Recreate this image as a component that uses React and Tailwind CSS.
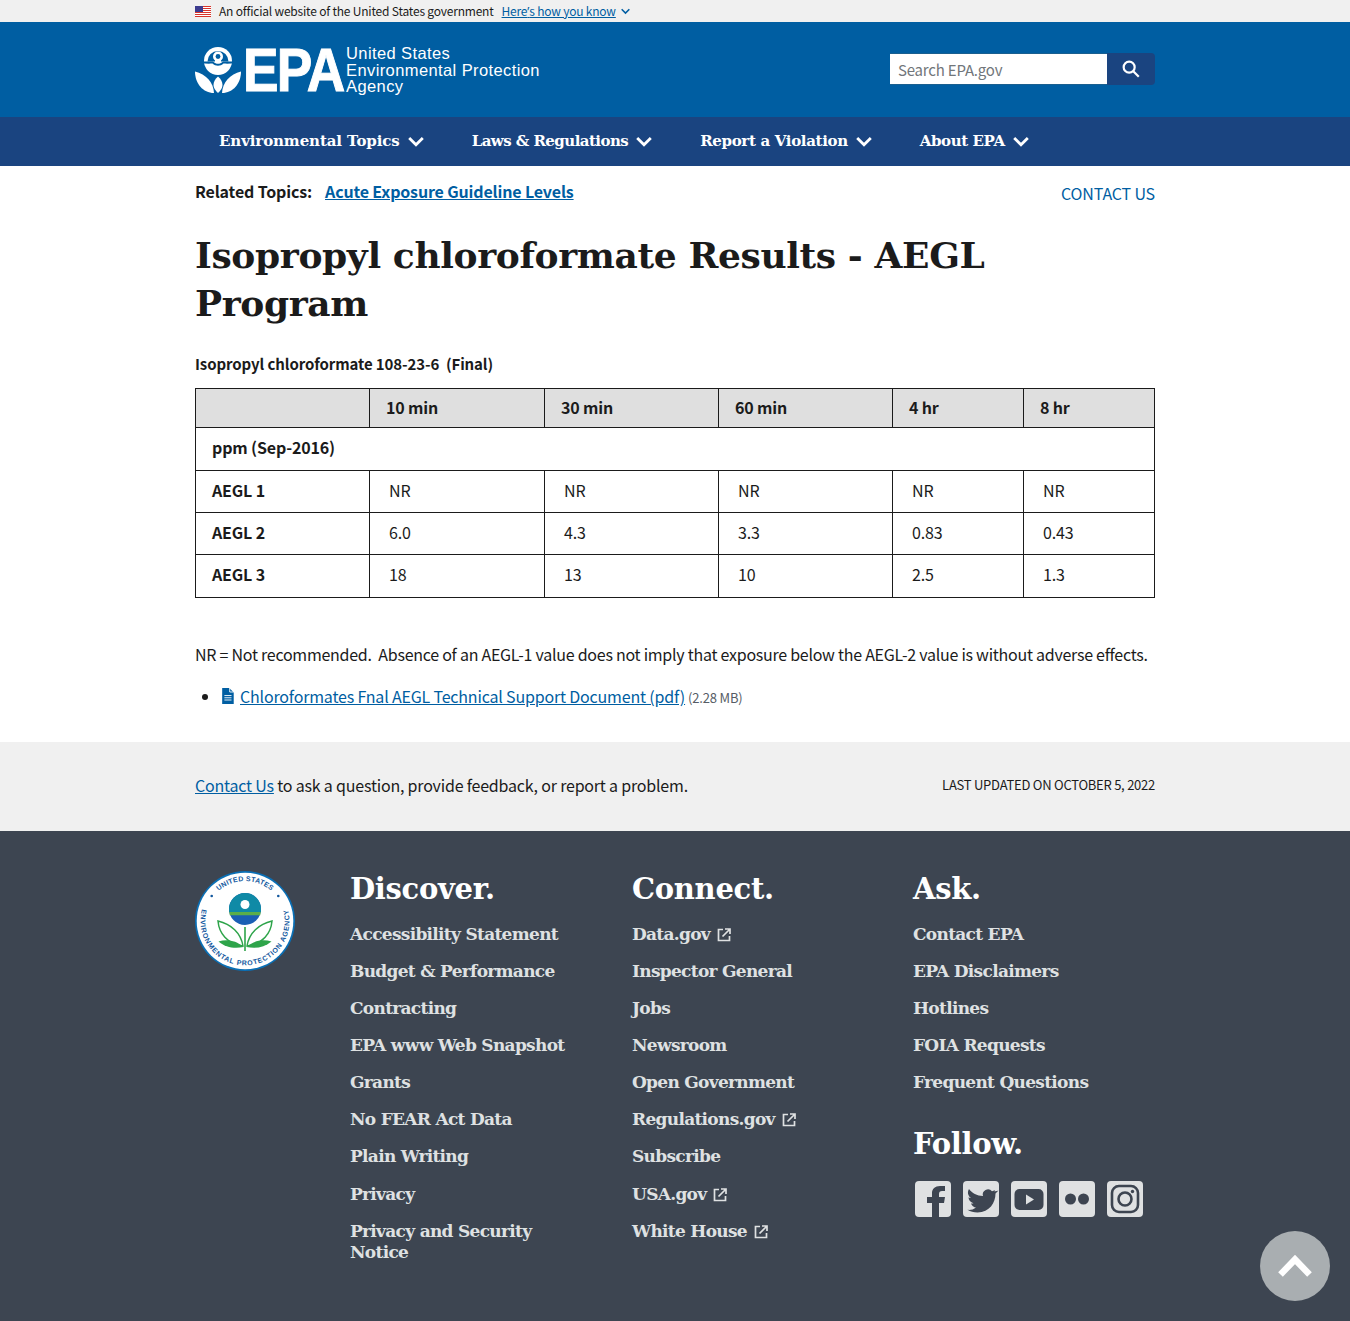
import React from "react";

const sans = "font-['Noto_Sans_CJK_SC','Noto_Sans',sans-serif]";
const serif = "font-['DejaVu_Serif',serif]";

function Chevron({ className }) {
  return (
    <svg viewBox="0 0 16 16" className={className} fill="none" stroke="currentColor" strokeWidth="2.8">
      <path d="M1.2 4 8 10.800 14.800 4" />
    </svg>
  );
}

function Ext() {
  return (
    <svg viewBox="0 0 16 16" className="inline-block w-[16px] h-[16px] ml-[6px] align-[-3px]" fill="none" stroke="#dfe1e2" strokeWidth="1.700">
      <path d="M7 2.500H2.500v11h11V9" />
      <path d="M6.500 9.500 13.500 2.500M9 2h5v5" />
    </svg>
  );
}

function Flag() {
  return (
    <svg viewBox="0 0 16 11" className="w-[16px] h-[11px]">
      <rect width="16" height="11" fill="#fff" />
      {[0, 2, 4, 6, 8, 10].map((y) => (
        <rect key={y} y={y} width="16" height="1" fill="#d9342b" />
      ))}
      <rect width="8" height="6" fill="#3c3b8e" />
    </svg>
  );
}

function Mark({ className }) {
  const c = "#fff";
  const bg = "#005ea2";
  return (
    <svg viewBox="0 0 46 46" className={className}>
      <circle cx="23" cy="14" r="14" fill={c} />
      <path d="M12.500 14.500a10.500 10.500 0 0 1 21 0z" fill={bg} />
      <circle cx="23" cy="9.500" r="5" fill={c} />
      <circle cx="23" cy="9.500" r="2.400" fill={bg} />
      <path d="M20 13h6v2h-6z" fill={c} />
      <path d="M6 14.300c4 .4 8 .2 12 .2 1.500 1.600 3.500 2.300 5 2.300s3.500-.7 5-2.300c4 0 8 .2 12-.2v1.700c-4 .8-8 .8-11.500.6-1.500 1.400-3.500 2.200-5.500 2.200s-4-.8-5.500-2.200C14 16.800 10 16.800 6 16z" fill={bg} />
      <path d="M19 46C18.500 35.500 11 27 0 24.500 0 36.500 8 46 19 46z" fill={c} />
      <path d="M27 46c.5-10.500 8-19 19-21.500C46 36.500 38 46 27 46z" fill={c} />
      <path d="M23 29.500c2.500 2.200 4.500 5 4.500 8.500 0 3-2 5.800-4.500 8-2.500-2.200-4.500-5-4.500-8 0-3.500 2-6.300 4.500-8.500z" fill={c} />
    </svg>
  );
}

function Seal() {
  return (
    <svg viewBox="0 0 100 100" className="w-[100px] h-[100px] shrink-0">
      <defs>
        <path id="arcTop" d="M20.800 22.700A40 40 0 0 1 79.200 22.700" />
        <path id="arcBottom" d="M9 32.600A44.500 44.500 0 1 0 91 32.600" />
      </defs>
      <circle cx="50" cy="50" r="50" fill="#0a6fb5" />
      <circle cx="50" cy="50" r="48.300" fill="#fff" />
      <text fontFamily="Liberation Sans, sans-serif" fontSize="7" fontWeight="700" fill="#12589e" letterSpacing=".2">
        <textPath href="#arcTop" startOffset="50%" textAnchor="middle">UNITED STATES</textPath>
      </text>
      <text fontFamily="Liberation Sans, sans-serif" fontSize="7" fontWeight="700" fill="#12589e" letterSpacing=".75">
        <textPath href="#arcBottom" startOffset="50%" textAnchor="middle">ENVIRONMENTAL PROTECTION AGENCY</textPath>
      </text>
      <circle cx="16.700" cy="25" r="1.300" fill="#12589e" />
      <circle cx="83.300" cy="25" r="1.300" fill="#12589e" />
      <circle cx="50" cy="38" r="16" fill="#1a5fb4" />
      <path d="M34 38a16 16 0 0 1 32 0v3H34z" fill="#0f8aa6" />
      <circle cx="50" cy="33.500" r="4.500" fill="#fff" />
      <path d="M34.300 41h31.400l-.5 3.200H34.800z" fill="#5bae4a" />
      <path d="M48 75C46 62 36 53 23 50c1 12 9 23 25 25z" fill="#fff" stroke="#2ea44a" strokeWidth="1.500" />
      <path d="M52 75c2-13 12-22 25-25-1 12-9 23-25 25z" fill="#fff" stroke="#2ea44a" strokeWidth="1.500" />
      <path d="M48.500 76c-8-7-17-8-25-5.500 7 6 16 7.500 25 5.500z" fill="#2ea44a" />
      <path d="M51.500 76c8-7 17-8 25-5.500-7 6-16 7.500-25 5.500z" fill="#2ea44a" />
      <path d="M50 56v24" stroke="#2ea44a" strokeWidth="1.600" />
    </svg>
  );
}

function Social({ children }) {
  return (
    <a className="block w-[36px] h-[36px] rounded-[4px] bg-[#dfe1e2] overflow-hidden">
      <svg viewBox="0 0 36 36" className="w-full h-full" fill="#3d4551">{children}</svg>
    </a>
  );
}

const topics = [
  ["Environmental Topics", "tracking-[-0.1px]"],
  ["Laws & Regulations", "tracking-[-0.55px]"],
  ["Report a Violation", "tracking-[-0.33px]"],
  ["About EPA", "tracking-[-0.4px]"],
];

const rows = [
  ["AEGL 1", "NR", "NR", "NR", "NR", "NR"],
  ["AEGL 2", "6.0", "4.3", "3.3", "0.83", "0.43"],
];
const lastRow = ["AEGL 3", "18", "13", "10", "2.5", "1.3"];

const discover = ["Accessibility Statement", "Budget & Performance", "Contracting", "EPA www Web Snapshot", "Grants", "No FEAR Act Data", "Plain Writing", "Privacy", "Privacy and Security Notice"];
const connect = [["Data.gov", 1], ["Inspector General"], ["Jobs"], ["Newsroom"], ["Open Government"], ["Regulations.gov", 1], ["Subscribe"], ["USA.gov", 1], ["White House", 1]];
const ask = ["Contact EPA", "EPA Disclaimers", "Hotlines", "FOIA Requests", "Frequent Questions"];

const linkCls = `${serif} block text-[17px] leading-[21px] font-bold text-[#dfe1e2] mb-[16.090px] tracking-[-0.7px]`;
const footHead = `${serif} text-[29px] leading-[36px] font-bold text-white mb-[17px] tracking-[-0.3px]`;
const cell = "border border-[#1b1b1b] pb-[4px]";
const headCell = "border border-[#1b1b1b] pb-[2px]";

export default function App() {
  return (
    <div className={`${sans} relative text-[16px] tracking-[-0.15px] text-[#1b1b1b] bg-white min-h-[1321px]`}>
      <div className="bg-[#f0f0f0] h-[22px]">
        <div className="w-[960px] mx-auto flex items-center h-full text-[12px] tracking-[-0.2px] leading-[22px]">
          <Flag />
          <span className="ml-[8px]">An official website of the United States government</span>
          <a className="ml-[8px] text-[#005ea2] underline">Here<span className="font-['Noto_Sans',sans-serif]">’</span>s how you know</a>
          <Chevron className="w-[9px] h-[9px] ml-[5px] text-[#005ea2]" />
        </div>
      </div>

      <header className="bg-[#005ea2] h-[95px]">
        <div className="w-[960px] mx-auto h-full flex items-center justify-between">
          <div className="flex items-center text-white tracking-normal">
            <Mark className="w-[46px] h-[46px]" />
            <span className="font-['Liberation_Sans',sans-serif] font-bold text-[62px] leading-[46px] tracking-[-2px] ml-[2px] w-[104px] origin-left scale-x-[0.86] [-webkit-text-stroke:1px_white]">EPA</span>
            <div className="font-['Liberation_Sans',sans-serif] text-[16.500px] leading-[16.500px] tracking-[0.4px] ml-[-1px] mt-[1px] whitespace-nowrap">
              <div>United States</div>
              <div>Environmental Protection</div>
              <div>Agency</div>
            </div>
          </div>
          <div className="flex mt-[-1px]">
            <div className="w-[217px] h-[32px] bg-white text-[15px] tracking-[-0.2px] leading-[32px] pl-[8px] text-[#71767a] border-y border-[#1a5f8f]">Search EPA.gov</div>
            <button className="w-[48px] h-[32px] bg-[#1a4480] rounded-r-[4px] flex items-center justify-center">
              <svg viewBox="0 0 24 24" className="w-[22px] h-[22px]" fill="none" stroke="#fff" strokeWidth="2.400">
                <circle cx="10" cy="10" r="6" />
                <path d="m14.500 14.500 6 6" />
              </svg>
            </button>
          </div>
        </div>
      </header>

      <nav className="bg-[#1a4480] h-[49px]">
        <div className={`${serif} w-[960px] mx-auto h-full flex items-center pl-[24px] gap-[48px] text-white font-bold text-[15px]`}>
          {topics.map(([t, tr]) => (
            <span key={t} className="flex items-center gap-[8px]">
              <span className={tr}>{t}</span>
              <Chevron className="w-[16px] h-[16px]" />
            </span>
          ))}
        </div>
      </nav>

      <main className="w-[960px] mx-auto">
        <div className="flex justify-between pt-[14px]">
          <div className="leading-[22px]">
            <b className="font-bold">Related Topics:</b>
            <a className="ml-[13px] font-bold text-[#005ea2] underline">Acute Exposure Guideline Levels</a>
          </div>
          <a className="text-[#005ea2] leading-[26px]">CONTACT US</a>
        </div>
        <h1 className={`${serif} text-[36px] leading-[47.500px] font-bold mt-[26px] tracking-[-0.37px]`}>Isopropyl chloroformate Results - AEGL Program</h1>
        <p className="font-bold mt-[26px] text-[15px] leading-[22px] tracking-[-0.1px]">Isopropyl chloroformate 108-23-6&nbsp; (Final)</p>
        <table className="w-[959px] mt-[13px] table-fixed border-collapse">
          <colgroup>
            <col className="w-[174px]" />
            <col className="w-[175px]" />
            <col className="w-[174px]" />
            <col className="w-[174px]" />
            <col className="w-[131px]" />
            <col className="w-[131px]" />
          </colgroup>
          <thead>
            <tr className="h-[39px] bg-[#dfdfdf] text-left">
              <th className={headCell} />
              {["10 min", "30 min", "60 min", "4 hr", "8 hr"].map((h) => (
                <th key={h} className={`${headCell} pl-[16px] font-bold`}>{h}</th>
              ))}
            </tr>
          </thead>
          <tbody>
            <tr className="h-[43px]">
              <td colSpan={6} className={`${cell} pl-[16px] font-bold`}>ppm (Sep-2016)</td>
            </tr>
            {rows.map((r) => (
              <tr key={r[0]} className="h-[42px]">
                <td className={`${cell} pl-[16px] font-bold`}>{r[0]}</td>
                {r.slice(1).map((c, i) => (
                  <td key={i} className={`${cell} pl-[19px]`}>{c}</td>
                ))}
              </tr>
            ))}
            <tr className="h-[43px]">
              <td className={`${cell} pl-[16px] font-bold`}>{lastRow[0]}</td>
              {lastRow.slice(1).map((c, i) => (
                <td key={i} className={`${cell} pl-[19px]`}>{c}</td>
              ))}
            </tr>
          </tbody>
        </table>
        <p className="mt-[44px] leading-[24px] tracking-[-0.26px] whitespace-nowrap">NR = Not recommended.&nbsp; Absence of an AEGL-1 value does not imply that exposure below the AEGL-2 value is without adverse effects.</p>
        <ul className="list-disc pl-[26px] mt-[18px] leading-[24px] tracking-[-0.18px]">
          <li>
            <svg viewBox="0 0 14 18" className="inline-block w-[13px] h-[16px] mr-[6px] align-[-1px]">
              <path d="M1 0h8l5 5v13H1z" fill="#005ea2" />
              <path d="M9.500 0v4.500H14" fill="none" stroke="#fff" />
              <path d="M3.500 8.500h8M3.500 11h8M3.500 13.500h8" stroke="#fff" />
            </svg>
            <a className="text-[#005ea2] underline">Chloroformates Fnal AEGL Technical Support Document (pdf)</a>
            <span className="text-[13px] text-[#565c65] ml-[3px]">(2.28 MB)</span>
          </li>
        </ul>
      </main>

      <div className="bg-[#f0f0f0] h-[89px] mt-[32px]">
        <div className="w-[960px] mx-auto h-full flex items-center justify-between pb-[3px] tracking-[-0.2px]">
          <p><a className="text-[#005ea2] underline">Contact Us</a> to ask a question, provide feedback, or report a problem.</p>
          <p className="text-[13px] tracking-[-0.25px]">LAST UPDATED ON OCTOBER 5, 2022</p>
        </div>
      </div>

      <footer className="bg-[#3d4551] h-[490px]">
        <div className="w-[960px] mx-auto pt-[40px] flex">
          <div className="w-[155px] shrink-0"><Seal /></div>
          <div className="w-[282px] shrink-0">
            <h2 className={footHead}>Discover.</h2>
            {discover.map((d) => <a key={d} className={`${linkCls} w-[225px]`}>{d}</a>)}
          </div>
          <div className="w-[281px] shrink-0">
            <h2 className={footHead}>Connect.</h2>
            {connect.map(([d, e]) => <a key={d} className={linkCls}>{d}{e && <Ext />}</a>)}
          </div>
          <div className="w-[242px] shrink-0">
            <h2 className={footHead}>Ask.</h2>
            {ask.map((d) => <a key={d} className={linkCls}>{d}</a>)}
            <h2 className={`${footHead} mt-[33px] mb-[19px]`}>Follow.</h2>
            <div className="flex gap-[12px] ml-[2px]">
              <Social><path d="M24 36V22h5l1-6h-6v-3c0-2 1-3 3-3h3V5h-5c-5 0-8 3-8 7v4h-5v6h5v14z" /></Social>
              <Social><path d="M32 9c-1 .6-2 1-3 1.200A5.200 5.200 0 0 0 20 15C14 15 9 12 6 8c-2 3-1 7 2 9-1 0-2-.3-2.500-.7 0 3 2 5 5 6-1 .3-2 .3-2.500.1.700 2.200 3 4 5 4-2.500 2-5.500 2.800-8.500 2.400 3 2 6 2.700 10 2.700 12 0 18-10 18-19 1-1 2-2 3-3-1 .4-2 .7-3.200.8C31 10.800 31.600 10 32 9z" /></Social>
              <Social>
                <rect x="3.500" y="8" width="29" height="21" rx="5" />
                <path d="M15 13.500v10l8-5z" fill="#dfe1e2" />
              </Social>
              <Social>
                <circle cx="11.500" cy="18" r="5.500" />
                <circle cx="24.500" cy="18" r="5.500" />
              </Social>
              <Social>
                <rect x="5" y="5" width="26" height="26" rx="7" fill="none" stroke="#3d4551" strokeWidth="2.600" />
                <circle cx="18" cy="18" r="6.500" fill="none" stroke="#3d4551" strokeWidth="2.600" />
                <circle cx="25.500" cy="10.500" r="1.700" />
              </Social>
            </div>
          </div>
        </div>
      </footer>

      <div className="fixed left-[1260px] top-[1231px] w-[70px] h-[70px] rounded-full bg-[#a9aeb1] flex items-center justify-center">
        <svg viewBox="0 0 70 70" className="w-[70px] h-[70px]" fill="none" stroke="#fff" strokeWidth="6.500">
          <path d="M20.500 43.500 35 28.500l14.500 15" />
        </svg>
      </div>
    </div>
  );
}
